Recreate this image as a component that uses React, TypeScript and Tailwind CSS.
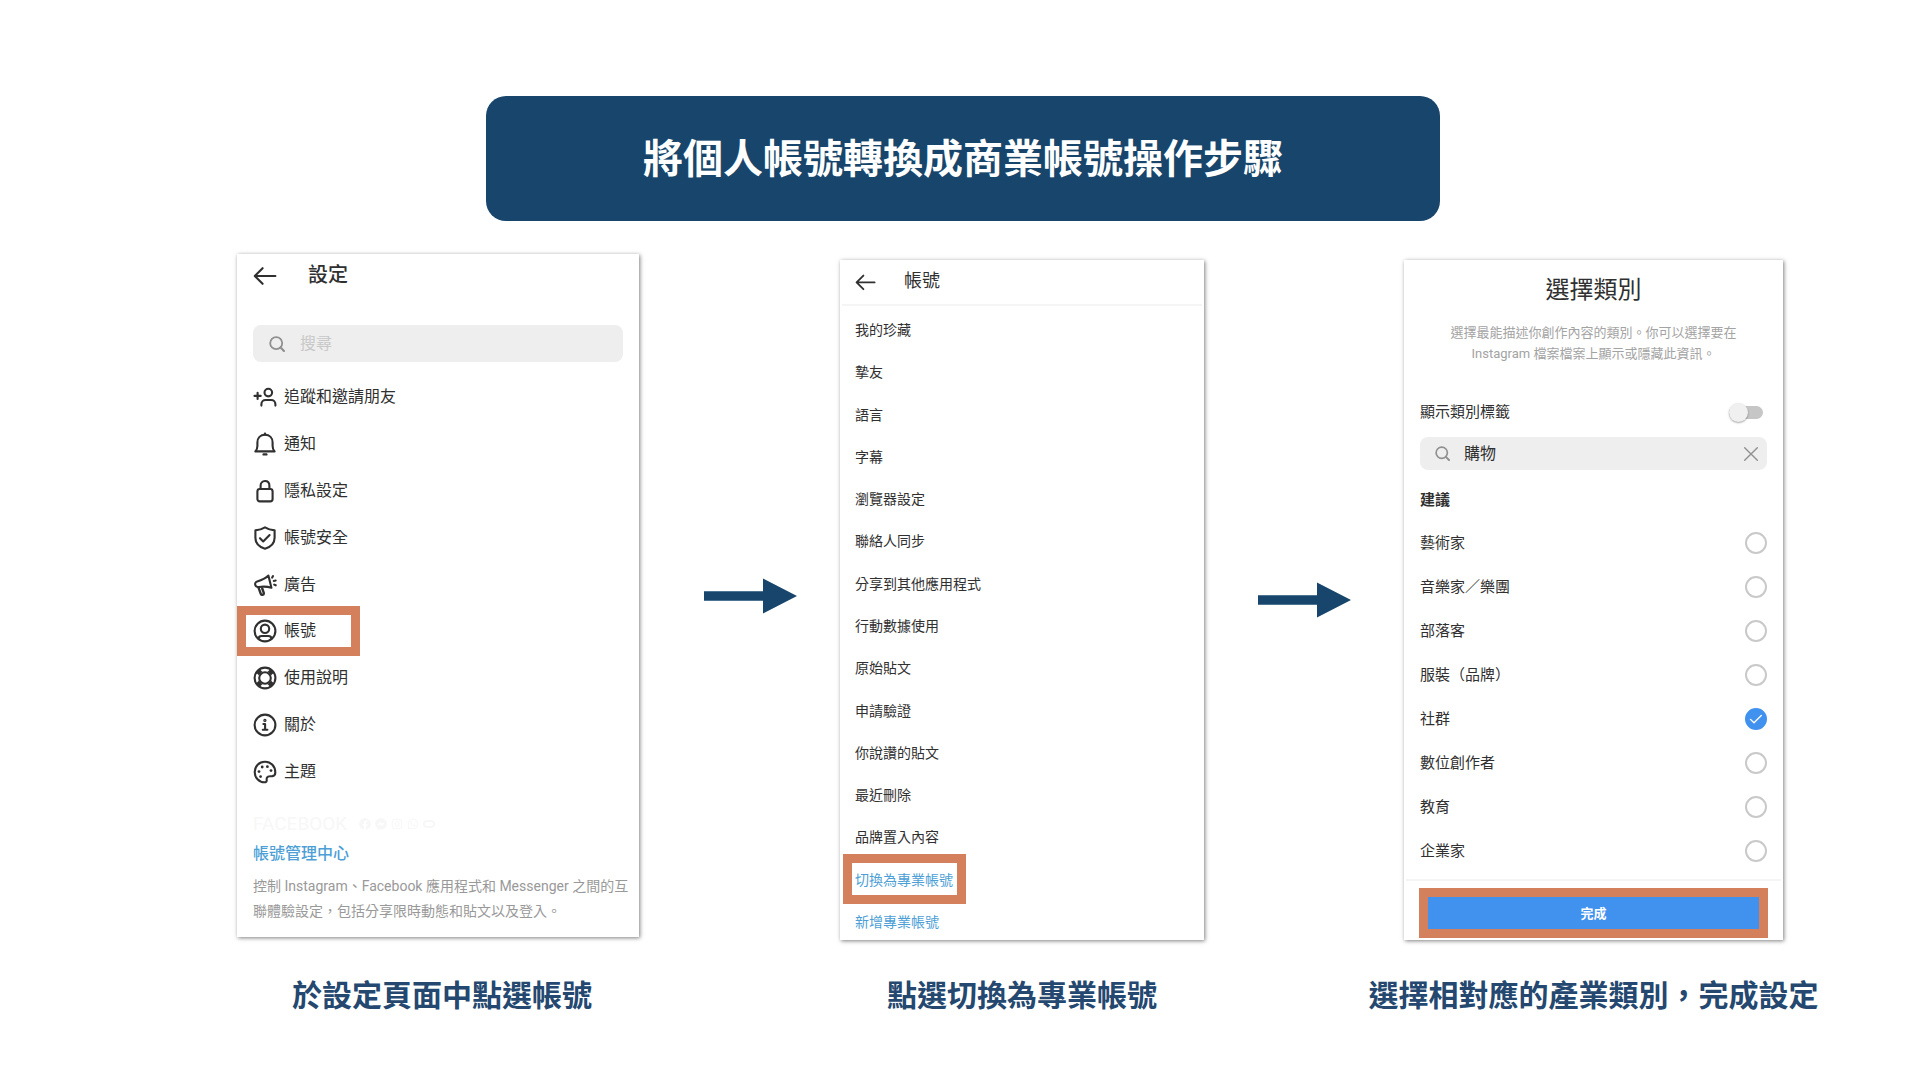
import { ReactNode, useState } from "react";
import { FaFacebook, FaFacebookMessenger, FaInstagram, FaWhatsapp } from "react-icons/fa";

function Icon({ children, className = "size-6" }: { children: ReactNode; className?: string }) {
  return (
    <svg
      viewBox="0 0 24 24"
      fill="none"
      stroke="currentColor"
      strokeWidth="2.1"
      strokeLinecap="round"
      strokeLinejoin="round"
      aria-hidden="true"
      className={`shrink-0 ${className}`}
    >
      {children}
    </svg>
  );
}

const BackIcon = ({ className }: { className?: string }) => (
  <Icon className={className}>
    <path d="M22.4 13H2M9.6 5.2 1.8 13l7.800 7.8" />
  </Icon>
);

const SearchIcon = ({ className }: { className?: string }) => (
  <Icon className={className}>
    <circle cx="10.8" cy="10.8" r="9" strokeWidth="2.7" />
    <path d="m17.4 17.4 5 5" strokeWidth="3.2" />
  </Icon>
);

const settings = [
  {
    label: "追蹤和邀請朋友",
    icon: (
      <>
        <circle cx="15.3" cy="7.6" r="3.8" />
        <path d="M8.4 20.6v-1.4c0-2.5 1.8-4.2 4.2-4.2h5.6c2.4 0 4.2 1.7 4.2 4.2v1.4M4.6 7.8V14M1.5 10.9h6.2" />
      </>
    ),
  },
  {
    label: "通知",
    icon: (
      <>
        <path d="M2.4 19.4h19.2c-1.4-1.6-2-3.2-2-5.4v-3.4c0-4.6-3-7.8-7.6-7.8s-7.6 3.2-7.6 7.8V14c0 2.2-.6 3.8-2 5.4Z" />
        <path d="M12 1.6v1M10.6 22.4h2.8" strokeWidth="2.4" />
      </>
    ),
  },
  {
    label: "隱私設定",
    icon: (
      <>
        <rect x="4.4" y="10" width="15.2" height="12.4" rx="2.4" />
        <path d="M7.6 10V6.8C7.6 4 9.3 2 12 2s4.4 2 4.4 4.8V10" />
      </>
    ),
  },
  {
    label: "帳號安全",
    icon: (
      <>
        <path d="M12 1.4c2.8 1.7 6 2.7 9.6 3v7.4c0 5.6-3.8 9.2-9.6 11-5.8-1.8-9.6-5.4-9.6-11V4.4c3.6-.3 6.8-1.3 9.6-3Z" />
        <path d="m7 12.2 3.2 3.2 6.4-6.4" />
      </>
    ),
  },
  {
    label: "廣告",
    icon: (
      <>
        <path d="M15.4 2.6c1.2 4.4 2 8 3 12.2-4.2-1.4-8.4-1.4-12.6-.8-1.6.2-3-.4-3.5-2-.5-1.5.2-3 1.9-3.5C8.6 7.3 12.4 5.6 15.4 2.6Z" />
        <path d="m5.4 14.4 2.4 6.4c.3.9 1.1 1.3 2 .9.9-.3 1.2-1.1.9-2l-1.5-4.2" strokeWidth="2.4" />
        <path d="m19.2 4.6.8-1.500M20.8 8l1.9-.5M21.2 11.6l1.5.7" />
      </>
    ),
  },
  {
    label: "帳號",
    icon: (
      <>
        <circle cx="12" cy="12" r="10.4" />
        <circle cx="12" cy="9.8" r="4.2" />
        <path d="M5.4 19.6c.3-1.8 1.5-2.6 3.2-2.6h6.8c1.7 0 2.9.8 3.2 2.6" />
      </>
    ),
  },
  {
    label: "使用說明",
    icon: (
      <>
        <circle cx="12" cy="12" r="10.4" />
        <circle cx="12" cy="12" r="5.8" />
        <path d="m5 5 2.6 2.6M16.4 16.4l2.6 2.6M19 5l-2.6 2.6M7.6 16.4 5 19" strokeWidth="5" strokeLinecap="butt" />
      </>
    ),
  },
  {
    label: "關於",
    icon: (
      <>
        <circle cx="12" cy="12" r="10.4" />
        <path d="M10.4 11h1.700v5.600M9.800 16.800h4.600" />
        <circle cx="11.9" cy="7.4" r=".6" />
      </>
    ),
  },
  {
    label: "主題",
    icon: (
      <>
        <path d="M12 1.7C6 1.7 1.7 6.3 1.7 12S6 22.3 11.4 22.3c1.6 0 2.5-.9 2.3-2.3-.3-2.2.6-3.6 2.9-3.7l2.7-.2c2-.2 3-1.5 3-3.7C22.3 6.3 18 1.7 12 1.7Z" />
        <g fill="currentColor" stroke="none">
          <circle cx="6" cy="11.6" r="1.4" />
          <circle cx="9.2" cy="7" r="1.4" />
          <circle cx="14.4" cy="6.7" r="1.4" />
          <circle cx="18" cy="10.6" r="1.4" />
          <circle cx="7.6" cy="16.6" r="1.4" />
        </g>
      </>
    ),
  },
];

const accountItems = [
  "我的珍藏",
  "摯友",
  "語言",
  "字幕",
  "瀏覽器設定",
  "聯絡人同步",
  "分享到其他應用程式",
  "行動數據使用",
  "原始貼文",
  "申請驗證",
  "你說讚的貼文",
  "最近刪除",
  "品牌置入內容",
];

const categories = ["藝術家", "音樂家／樂團", "部落客", "服裝（品牌）", "社群", "數位創作者", "教育", "企業家"];

const card = "w-full bg-white text-[#303030] shadow-[1px_1px_4px_rgba(0,0,0,0.5)]";
const caption = "text-[30px] leading-[44px] font-bold whitespace-nowrap text-[#24486f]";

function SettingsCard() {
  return (
    <section className={`${card} flex aspect-[402/683] flex-col px-4 pb-[13px]`}>
      <header className="flex h-[42px] items-center gap-[31px]">
        <button aria-label="返回">
          <BackIcon />
        </button>
        <h2 className="text-[20px] leading-6 font-medium">設定</h2>
      </header>
      <label className="mt-[29px] flex h-[37px] items-center gap-[15px] rounded-lg bg-[#eeeeee] px-4 text-[#909090]">
        <SearchIcon className="size-4" />
        <input
          type="search"
          aria-label="搜尋"
          placeholder="搜尋"
          className="min-w-0 flex-1 bg-transparent text-[16px] outline-none placeholder:text-[#c8c8c8]"
        />
      </label>
      <ul className="mt-[23px] flex flex-1 flex-col justify-between">
        {settings.map((item) => (
          <li key={item.label} className="relative">
            <a href="#" className="flex items-center gap-[7px] text-[16px] leading-6">
              <Icon>{item.icon}</Icon>
              {item.label}
            </a>
            {item.label === "帳號" && (
              <span className="pointer-events-none absolute -top-[13px] -left-4 h-[50px] w-[123px] border-9 border-[#d5805d]" />
            )}
          </li>
        ))}
      </ul>
      <div className="mt-[30px] flex items-center gap-3 text-[#f7f7f7]">
        <span className="text-[19px] leading-5">FACEBOOK</span>
        <span className="flex items-center gap-1 text-[12px]">
          <FaFacebook />
          <FaFacebookMessenger />
          <FaInstagram />
          <FaWhatsapp />
          <span className="h-2 w-3 rounded-full border-2" />
        </span>
      </div>
      <a href="#" className="mt-2 text-[16px] leading-6 font-medium text-[#4d9fd6]">
        帳號管理中心
      </a>
      <p className="mt-2 text-[14px] leading-[25px] whitespace-nowrap text-[#999999]">
        控制 Instagram、Facebook 應用程式和 Messenger 之間的互
        <br />
        聯體驗設定，包括分享限時動態和貼文以及登入。
      </p>
    </section>
  );
}

function AccountCard() {
  return (
    <section className={`${card} flex aspect-[364/680] flex-col pb-2`}>
      <header className="mx-[2px] flex h-[46px] items-center gap-7 border-b-2 border-[#f5f5f5] px-[13px] pb-[2px]">
        <button aria-label="返回">
          <BackIcon className="size-[21px]" />
        </button>
        <h2 className="text-[18px] leading-6">帳號</h2>
      </header>
      <ul className="mt-[14px] flex flex-1 flex-col justify-between px-[15px] text-[14px] leading-5">
        {accountItems.map((label) => (
          <li key={label}>
            <a href="#">{label}</a>
          </li>
        ))}
        <li className="relative text-[#4d9fd6]">
          <a href="#">切換為專業帳號</a>
          <span className="pointer-events-none absolute -top-4 -left-3 h-[50px] w-[123px] border-9 border-[#d5805d]" />
        </li>
        <li className="text-[#4d9fd6]">
          <a href="#">新增專業帳號</a>
        </li>
      </ul>
    </section>
  );
}

function CategoryCard() {
  const [selected, setSelected] = useState("社群");
  const [query, setQuery] = useState("購物");

  return (
    <section className={`${card} px-4 pt-3 pb-[2px] text-[15px] leading-6`}>
      <h2 className="text-center text-[24px] leading-9">選擇類別</h2>
      <p className="mt-[14px] text-center text-[13px] leading-[21px] text-[#a3a3a3]">
        選擇最能描述你創作內容的類別。你可以選擇要在
        <br />
        Instagram 檔案檔案上顯示或隱藏此資訊。
      </p>
      <label className="mt-9 flex items-center justify-between pr-1">
        顯示類別標籤
        <span className="flex h-[13px] w-[34px] items-center rounded-full bg-[#c6c6c6]">
          <input
            type="checkbox"
            className="size-[19px] appearance-none rounded-full bg-[#f0f0f0] shadow-[0_1px_2px_rgba(0,0,0,0.35)] checked:ml-auto checked:bg-[#4192ef]"
          />
        </span>
      </label>
      <div className="mt-[13px] flex h-[33px] items-center gap-[14px] rounded-lg bg-[#eeeeee] pr-2 pl-[15px] text-[#909090]">
        <SearchIcon className="size-[15px]" />
        <input
          aria-label="搜尋類別"
          value={query}
          onChange={(e) => setQuery(e.target.value)}
          className="min-w-0 flex-1 bg-transparent text-[16px] text-[#303030] outline-none"
        />
        <button aria-label="清除" onClick={() => setQuery("")}>
          <Icon className="size-4">
            <path d="m2.500 2.500 19 19M21.500 2.500l-19 19" />
          </Icon>
        </button>
      </div>
      <h3 className="mt-[18px] font-bold">建議</h3>
      <div className="mt-[9px]">
        {categories.map((name) => (
          <label key={name} className="flex h-11 items-center justify-between">
            {name}
            <span className="relative flex">
              <input
                type="radio"
                name="category"
                checked={selected === name}
                onChange={() => setSelected(name)}
                className="size-[22px] appearance-none rounded-full border-2 border-[#c9c9c9] checked:border-[#4192ef] checked:bg-[#4192ef]"
              />
              {selected === name && (
                <Icon className="pointer-events-none absolute inset-0 size-[22px] text-white">
                  <path d="m6 12.4 3.8 3.8 8-8" strokeWidth="1.5" />
                </Icon>
              )}
            </span>
          </label>
        ))}
      </div>
      <hr className="-mx-[14px] mt-[6px] border-t-2 border-[#f5f5f5]" />
      <button className="-mx-px mt-[7px] block h-[50px] w-[calc(100%+2px)] border-9 border-[#d5805d] bg-[#4192ef] pt-[2px] text-[13px] font-bold text-white">
        完成
      </button>
    </section>
  );
}

function StepArrow() {
  return (
    <svg viewBox="0 0 93 36" className="w-[93px] text-[#17456b]" fill="currentColor" aria-hidden="true">
      <path d="M0 13.2h59V.5L93 18 59 35.5V22.7H0Z" />
    </svg>
  );
}

export default function App() {
  return (
    <main
      lang="zh-Hant"
      className="min-h-screen bg-white pt-24 pb-[62px] font-[Roboto,'Noto_Sans_CJK_TC',sans-serif]"
    >
      <div className="flex justify-center pl-[6px]">
        <h1 className="flex h-[125px] w-[954px] max-w-full items-center justify-center rounded-[20px] bg-[#17456b] pt-[2px] text-[40px] font-bold text-white">
          將個人帳號轉換成商業帳號操作步驟
        </h1>
      </div>
      <div className="mt-[33px] grid grid-cols-[minmax(0,402fr)_minmax(0,201fr)_minmax(0,364fr)_minmax(0,200fr)_minmax(0,379fr)] items-end pr-[137px] pl-[237px]">
        <figure className="flex flex-col items-center gap-[37px]">
          <SettingsCard />
          <figcaption className={`${caption} pl-2`}>於設定頁面中點選帳號</figcaption>
        </figure>
        <div className="flex justify-center self-center pl-[22px] pb-[80px]">
          <StepArrow />
        </div>
        <figure className="flex flex-col items-center gap-[34px]">
          <AccountCard />
          <figcaption className={caption}>點選切換為專業帳號</figcaption>
        </figure>
        <div className="flex justify-center self-center pb-[72px]">
          <StepArrow />
        </div>
        <figure className="flex flex-col items-center gap-[34px]">
          <CategoryCard />
          <figcaption className={caption}>選擇相對應的產業類別，完成設定</figcaption>
        </figure>
      </div>
    </main>
  );
}
